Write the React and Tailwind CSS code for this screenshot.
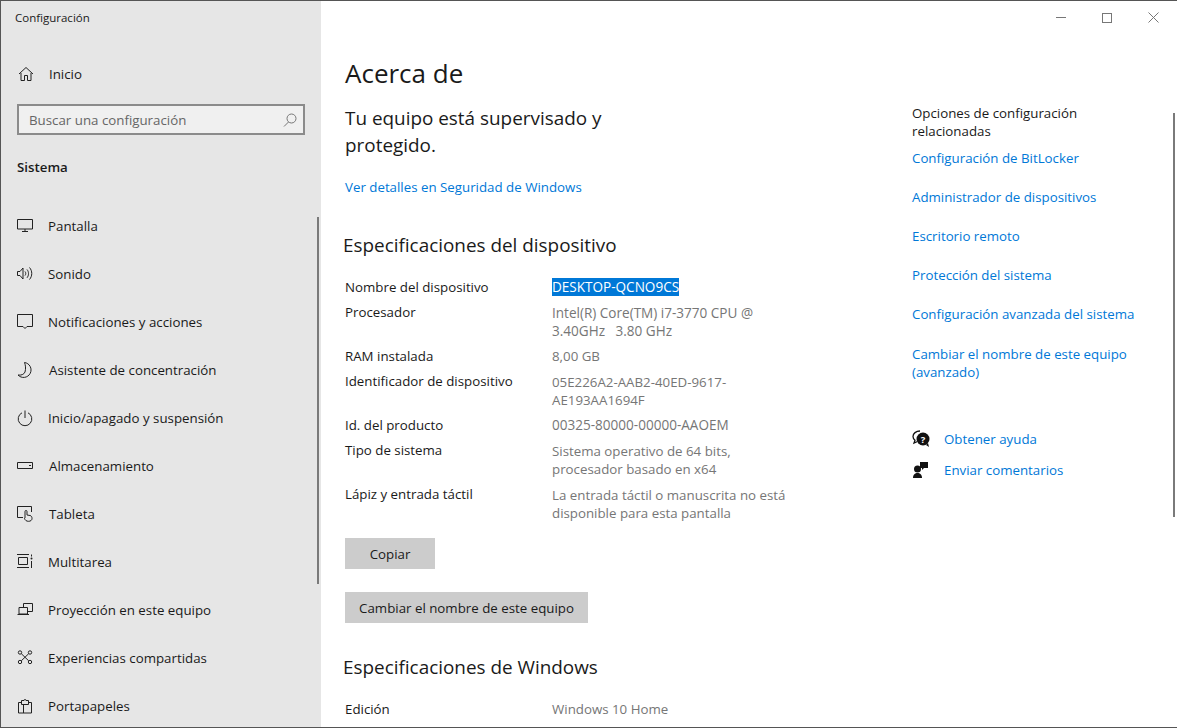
import React from "react";

const Ic = ({ children }) => (
  <svg width="16" height="16" viewBox="0 0 16 16" fill="none" stroke="#222" strokeWidth="1" overflow="visible">
    {children}
  </svg>
);

const icons = {
  Pantalla: (
    <Ic>
      <path d="M.5 1.500h15v9.500h-15zM8 11v2.500M5 13.500h6" />
    </Ic>
  ),
  Sonido: (
    <Ic>
      <path d="M.5 5.500h2.500l3-3.500v11l-3-3.500h-2.500zM8 5.500c1 1.200 1 2.800 0 4M10 3.500c2 2.300 2 6 0 8.300M12.500 1.500c3 3.400 3 8.600 0 12" />
    </Ic>
  ),
  Notificaciones: (
    <Ic>
      <path d="M.5.500h15v12h-5.500l-2 2-2-2h-5.500z" />
    </Ic>
  ),
  Asistente: (
    <Ic>
      <path d="M7.500.500a7.500 7.500 0 1 1-6.500 12.500c3 .5 6-.5 7-3 1-3.500.5-7-.5-9.500z" />
    </Ic>
  ),
  Inicio: (
    <Ic>
      <path d="M5 2.800a6.800 6.800 0 1 0 6 0M8 .5v7.500" />
    </Ic>
  ),
  Almacen: (
    <Ic>
      <path d="M.5 4.500h15v6h-15zM12 7.500h2" />
    </Ic>
  ),
  Tableta: (
    <Ic>
      <path d="M6 11.500h-5.500v-11h14v5.500M8 12v-6.500a1 1 0 0 1 2 0v3.500l3 .5c1.500.3 2 1.500 2 3 0 1.800-1.500 2.800-3.500 2.800s-3.500-1-4-3z" />
    </Ic>
  ),
  Multitarea: (
    <Ic>
      <path d="M0 .5h12M0 13.500h12M1.500 3.500h9v7h-9zM14.500 .5v2M14.500 7v7" />
      <circle cx="14.500" cy="4.500" r="1" fill="#222" stroke="none" />
    </Ic>
  ),
  Proyeccion: (
    <Ic>
      <path d="M6.500 5v-3.500h9v8h-4.500M2 5.500h8.500v6.500h-8.500zM.5 12.500h11.500" />
    </Ic>
  ),
  Experiencias: (
    <Ic>
      <circle cx="3" cy="2.500" r="1.700" />
      <circle cx="13" cy="2.500" r="1.700" />
      <circle cx="3" cy="12" r="1.700" />
      <circle cx="13" cy="12" r="1.700" />
      <path d="M4.300 3.700l7.400 7.100M11.700 3.700l-7.400 7.100" />
    </Ic>
  ),
  Portapapeles: (
    <Ic>
      <path d="M1.500 4.500v10.500h13v-10.500h-3M4.500 4.500h-3M4.500 6.500v-4h2.500a1 1 0 0 1 2 0h2.500v4zM6.500 6.500v8.500" />
    </Ic>
  ),
};

const nav = [
  ["Pantalla", "Pantalla", 0],
  ["Sonido", "Sonido", 0],
  ["Notificaciones y acciones", "Notificaciones", 0],
  ["Asistente de concentración", "Asistente", 1],
  ["Inicio/apagado y suspensión", "Inicio", 0],
  ["Almacenamiento", "Almacen", 1],
  ["Tableta", "Tableta", 1],
  ["Multitarea", "Multitarea", 0],
  ["Proyección en este equipo", "Proyeccion", 0],
  ["Experiencias compartidas", "Experiencias", 0],
  ["Portapapeles", "Portapapeles", 0],
];

const Spec = ({ label, children, cls = "", multi = false, wide = false }) => (
  <div className={`flex ${cls}`}>
    <div className="w-[207px] shrink-0 text-[#1a1a1a]">{label}</div>
    <div className={`w-[250px] text-[#767676] ${multi ? "pt-px" : ""} ${wide ? "text-[13.55px]" : ""}`}>{children}</div>
  </div>
);

const links = [
  ["Configuración de BitLocker", "mb-[21px]"],
  ["Administrador de dispositivos", "mb-[21px]"],
  ["Escritorio remoto", "mb-[21px]"],
  ["Protección del sistema", "mb-[21px]"],
  ["Configuración avanzada del sistema", "mb-[22px]"],
];

export default function App() {
  return (
    <div
      className="w-[1177px] h-[728px] overflow-hidden bg-[#555] pt-px pl-px text-[13.3px] leading-[18px] text-[#1a1a1a]"
      style={{ fontFamily: '"Open Sans", "Noto Sans", sans-serif' }}
    >
      <div className="flex h-[726px] w-[1176px]">
        <aside className="relative w-[320px] shrink-0 bg-[#e6e6e6]">
          <div className="pl-[14px] pt-[9px] text-[11.500px] leading-[16px]">Configuración</div>
          <div className="flex h-[20px] items-center mt-[38px] pl-[17px]">
            <svg width="16" height="16" viewBox="0 0 16 16" fill="none" stroke="#222" strokeWidth="1">
              <path d="M1 8l7-6.500 7 6.500M3 7v7.500h3.500v-5h3v5h3.500v-7.500" />
            </svg>
            <span className="ml-[15px]">Inicio</span>
          </div>
          <div className="ml-[16px] mt-[20px] flex h-[31px] w-[288px] items-center justify-between border-2 border-[#8b8b8b] bg-[#f0f0f0] pl-[10px] pr-[6px] text-[#666]">
            <span>Buscar una configuración</span>
            <svg width="14" height="14" viewBox="0 0 14 14" fill="none" stroke="#777" strokeWidth="1">
              <circle cx="8.500" cy="5.500" r="4.500" />
              <path d="M5.500 9L1 13.500" />
            </svg>
          </div>
          <div className="pl-[16px] mt-[23px] font-semibold">Sistema</div>
          <div className="mt-[26px] flex flex-col">
            {nav.map(([label, key, nudge]) => (
              <div key={label} className="flex h-[48px] items-center pl-[16px]">
                <span className="w-[16px] shrink-0">{icons[key]}</span>
                <span className={nudge ? "ml-[16px]" : "ml-[15px]"}>{label}</span>
              </div>
            ))}
          </div>
          <div className="absolute right-[2px] top-[216px] h-[367px] w-[2px] bg-[#7a7a7a]" />
        </aside>

        <main className="relative flex flex-1 bg-white">
          <div className="w-[591px] shrink-0 pl-[24px]">
            <h1 className="mt-[54px] text-[26px] leading-[36px] font-normal">Acerca de</h1>
            <p className="mt-[14px] w-[300px] text-[18.900px] leading-[27px]">Tu equipo está supervisado y protegido.</p>
            <div className="mt-[19px] text-[#0078d7]">Ver detalles en Seguridad de Windows</div>
            <h2 className="-ml-[2px] mt-[36px] text-[18.900px] leading-[27px] font-normal">Especificaciones del dispositivo</h2>
            <div className="mt-[19px]">
              <Spec label="Nombre del dispositivo" wide>
                <span className="bg-[#0078d7] text-white">DESKTOP-QCNO9CS</span>
              </Spec>
              <Spec label="Procesador" cls="mt-[7px]" multi wide>
                Intel(R) Core(TM) i7-3770 CPU @<br />3.40GHz{"\u00a0\u00a0\u00a0"}3.80 GHz
              </Spec>
              <Spec label="RAM instalada" cls="mt-[7px]">8,00 GB</Spec>
              <Spec label="Identificador de dispositivo" cls="mt-[7px]" multi>05E226A2-AAB2-40ED-9617-AE193AA1694F</Spec>
              <Spec label="Id. del producto" cls="mt-[7px]" wide>00325-80000-00000-AAOEM</Spec>
              <Spec label="Tipo de sistema" cls="mt-[7px]" multi>Sistema operativo de 64 bits, procesador basado en x64</Spec>
              <Spec label="Lápiz y entrada táctil" cls="mt-[7px]" multi>La entrada táctil o manuscrita no está disponible para esta pantalla</Spec>
            </div>
            <div className="mt-[16px] flex h-[31px] w-[90px] items-center justify-center bg-[#cccccc]">Copiar</div>
            <div className="mt-[23px] flex h-[31px] w-[243px] items-center justify-center bg-[#cccccc]">Cambiar el nombre de este equipo</div>
            <h2 className="-ml-[2px] mt-[31px] text-[18.900px] leading-[27px] font-normal">Especificaciones de Windows</h2>
            <div className="mt-[19px]">
              <Spec label="Edición">Windows 10 Home</Spec>
            </div>
          </div>

          <div className="w-[240px] pt-[103px]">
            <div className="mb-[9px]">Opciones de configuración relacionadas</div>
            <div className="text-[#0078d7]">
              {links.map(([t, m]) => (
                <div key={t} className={m}>{t}</div>
              ))}
              <div>Cambiar el nombre de este equipo (avanzado)</div>
            </div>
            <div className="mt-[49px] flex items-center text-[#0078d7]">
              <svg width="18" height="18" viewBox="0 0 18 18" className="mr-[14px]">
                <path d="M8 1C4 1 1 3.500 1 6.500c0 1.500.8 2.800 2 3.700L2 13l3.500-1.500" fill="none" stroke="#111" strokeWidth="1.300" />
                <circle cx="11" cy="9" r="6.500" fill="#111" />
                <path d="M14 15l3 2-1-4z" fill="#111" />
                <text x="11" y="12.500" textAnchor="middle" fontSize="9.500" fontWeight="700" fill="#fff" stroke="none">?</text>
              </svg>
              Obtener ayuda
            </div>
            <div className="mt-[13px] flex items-center text-[#0078d7]">
              <svg width="18" height="18" viewBox="0 0 18 18" className="mr-[14px]">
                <circle cx="5.500" cy="8" r="3.500" fill="#111" />
                <path d="M1 17c0-3.500 2-5 4.500-5s4.500 1.500 4.500 5z" fill="#111" />
                <path d="M8 1h8v6h-4l-2 2V7H8z" fill="#111" />
              </svg>
              Enviar comentarios
            </div>
          </div>

          <div className="absolute right-[18px] top-[11px] flex items-center gap-[36px]">
            <span className="h-px w-[10px] bg-[#777]" />
            <span className="h-[10px] w-[10px] border border-[#777]" />
            <svg width="11" height="11" viewBox="0 0 11 11" stroke="#777" strokeWidth="1" fill="none">
              <path d="M.5.500l10 10M10.500.500l-10 10" />
            </svg>
          </div>
          <div className="absolute right-[2px] top-[112px] h-[404px] w-[2px] bg-[#7a7a7a]" />
        </main>
      </div>
    </div>
  );
}
